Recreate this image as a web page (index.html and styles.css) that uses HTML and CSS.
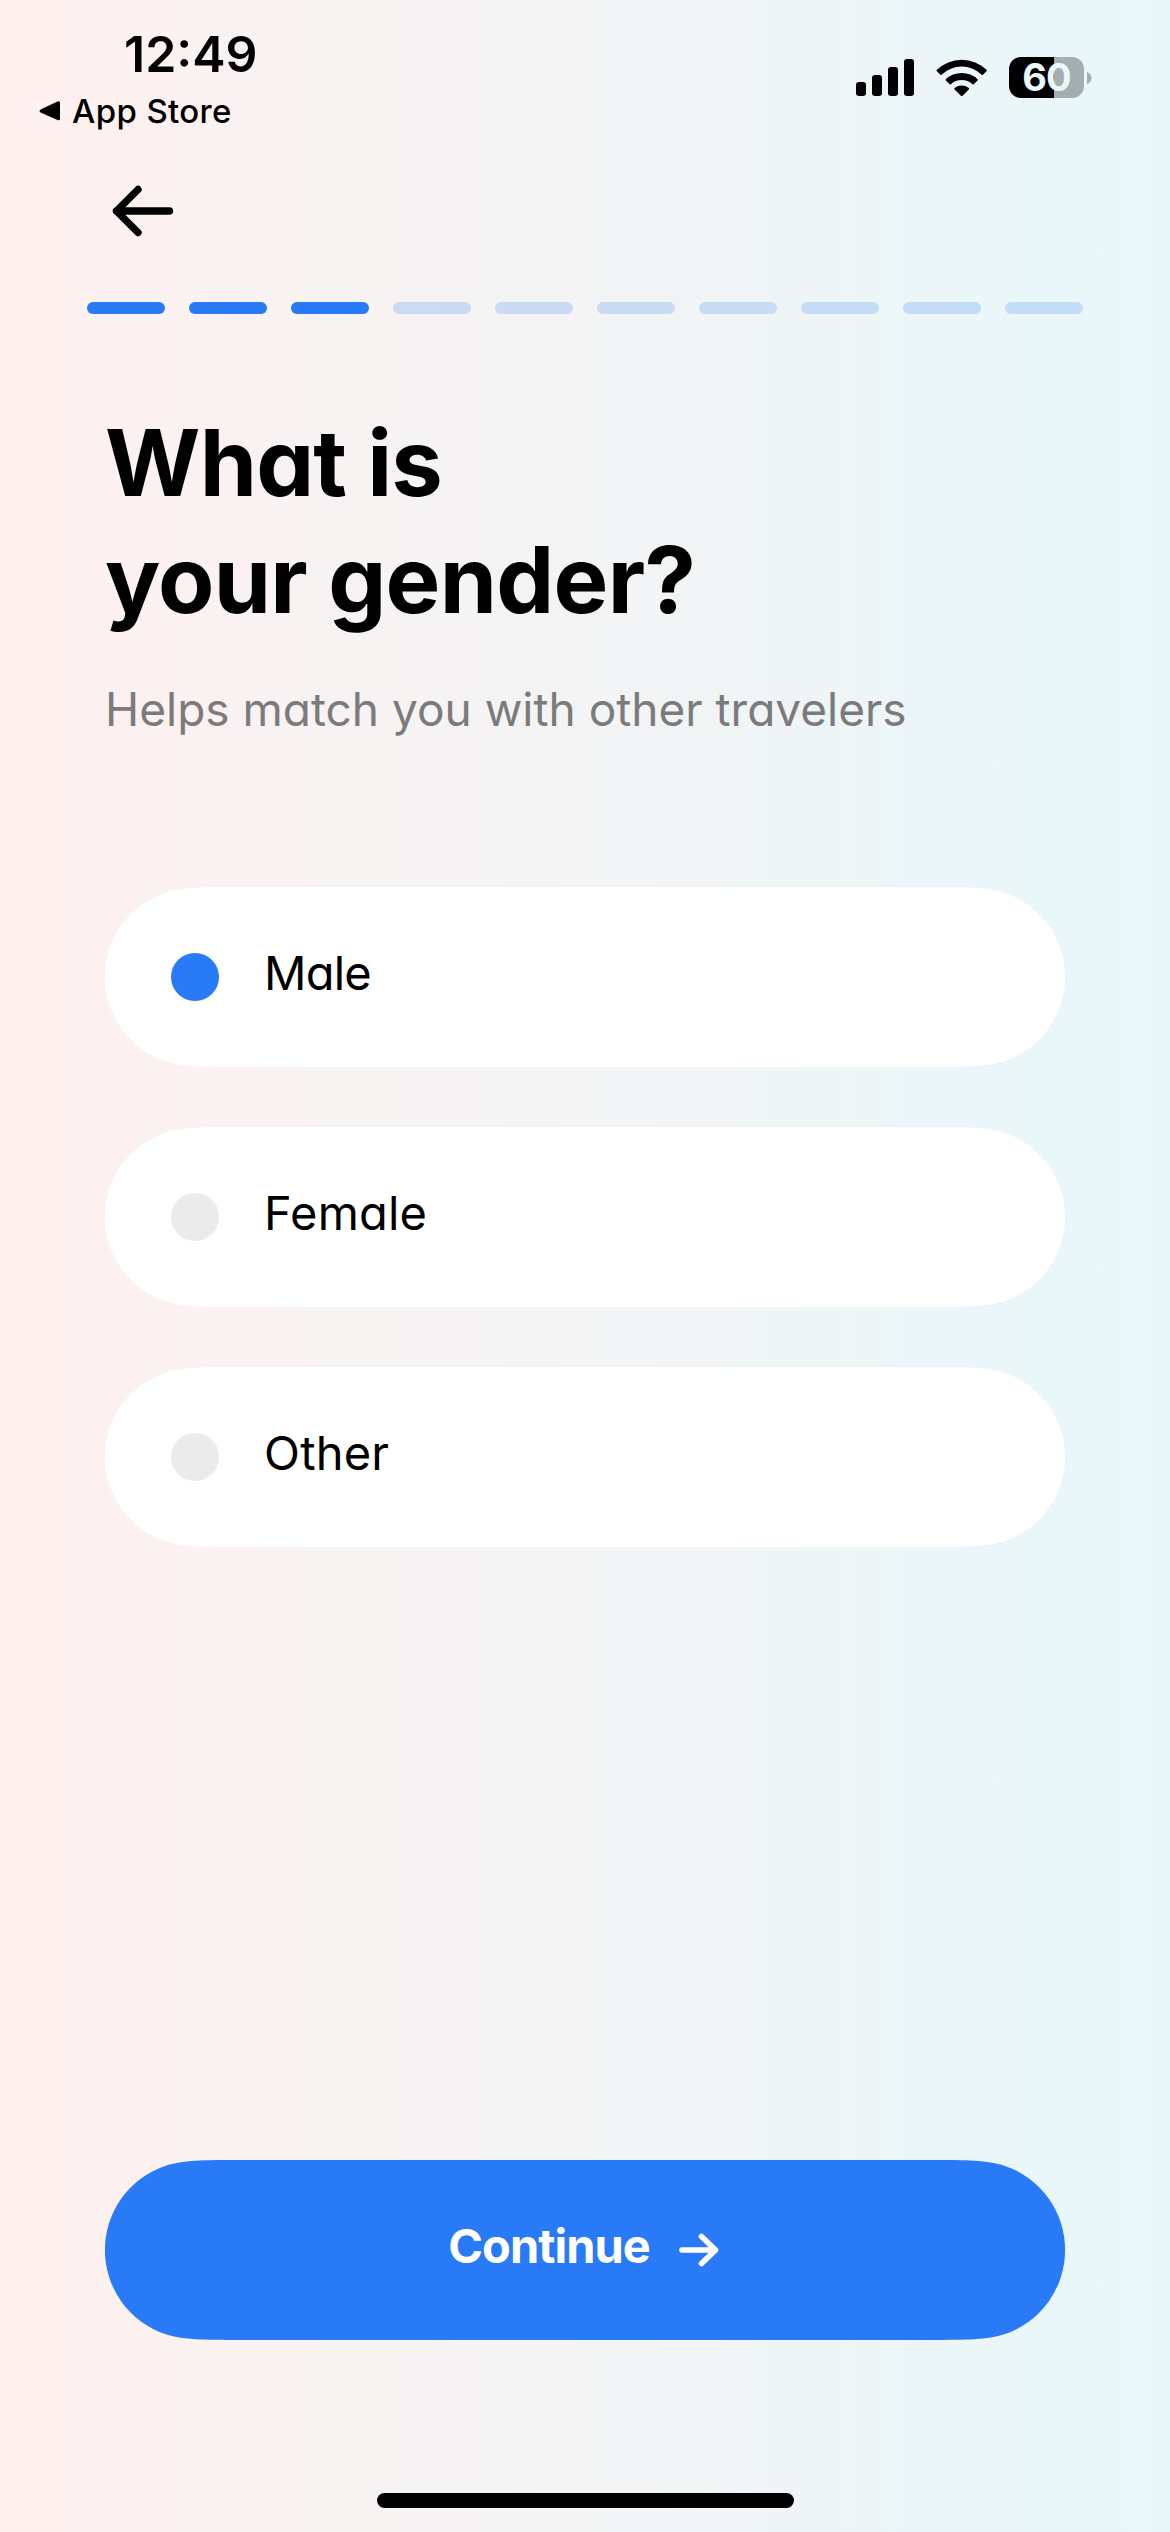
FILE: index.html
```html
<!DOCTYPE html>
<html lang="en">
<head>
<meta charset="utf-8">
<title>What is your gender?</title>
<link rel="stylesheet" href="styles.css">
</head>
<body>
<div class="screen">
  <header class="status">
    <div class="status-left">
      <div class="time">12:49</div>
      <div class="return">
        <svg width="22" height="22" viewBox="0 0 22 22"><path d="M2 9.200 18.500 1.500Q21 .600 21 3V18.500Q21 21 18.500 20L2 12.800Q-1 11 2 9.200Z"/></svg>
        <span>App Store</span>
      </div>
    </div>
    <div class="status-right">
      <svg class="signal" width="58" height="37" viewBox="0 0 58 37"><rect y="23" width="10" height="14" rx="3"/><rect x="16" y="16" width="10" height="21" rx="3"/><rect x="32" y="8" width="10" height="29" rx="3"/><rect x="48" width="10" height="37" rx="3"/></svg>
      <svg class="wifi" width="52" height="38" viewBox="0 0 52 38">
        <path d="M.7 10.900A36 36 0 0 1 50.700 10.900Q51.200 11.500 50.700 12L47 15.700Q46.400 16.300 45.800 15.700A29 29 0 0 0 5.600 15.700Q5 16.300 4.400 15.700L.7 12Q.2 11.500 .7 10.900Z"/>
        <path d="M9.800 20.300A23 23 0 0 1 41.600 20.300Q42.200 20.900 41.600 21.500L37.700 25.200Q37.100 25.700 36.500 25.200A16 16 0 0 0 14.900 25.200Q14.300 25.700 13.700 25.200L9.800 21.500Q9.200 20.900 9.800 20.300Z"/>
        <path d="M18.600 29A11.500 11.500 0 0 1 32.800 29Q33.500 29.700 32.800 30.400L26.500 36.700Q25.700 37.400 24.900 36.700L18.600 30.400Q17.900 29.700 18.600 29Z"/>
      </svg>
      <div class="battery"><div class="battery-body">60</div><svg width="5" height="12" viewBox="0 0 5 12"><path d="M0 0Q4.500 2 4.500 6T0 12Z" fill="#a4adaf"/></svg></div>
    </div>
  </header>

  <nav class="nav">
    <svg width="62" height="52" viewBox="0 0 62 52"><path d="M26 4.500 4.500 26 26 47.500M4.500 26H57.500"/></svg>
  </nav>

  <div class="progress">
    <i class="step done"></i><i class="step done"></i><i class="step done"></i><i class="step"></i><i class="step"></i><i class="step"></i><i class="step"></i><i class="step"></i><i class="step"></i><i class="step"></i>
  </div>

  <main class="content">
    <h1 class="title"><span class="title-a">What is</span><br><span class="title-b">your gender?</span></h1>
    <p class="hint">Helps match you with other travelers</p>
    <div class="options">
      <div class="option pill"><i class="radio selected"></i><span class="label label-tight">Male</span></div>
      <div class="option pill"><i class="radio"></i><span class="label">Female</span></div>
      <div class="option pill"><i class="radio"></i><span class="label">Other</span></div>
    </div>
  </main>

  <footer class="footer">
    <div class="continue pill">
      <span class="continue-label">Continue</span>
      <svg width="40" height="34" viewBox="0 0 40 34"><path d="M3 17H36.500M22.500 3.500 36.500 17 22.500 30.500"/></svg>
    </div>
    <div class="home"></div>
  </footer>
</div>
</body>
</html>
```
FILE: styles.css
```css
* { box-sizing: border-box; }
body { margin: 0; }
svg { display: block; flex: none; }

.screen {
  width: 1170px;
  height: 2532px;
  display: flex;
  flex-direction: column;
  overflow: hidden;
  background: linear-gradient(90deg, #fff0ef 0%, #f8f3f3 28%, #f3f4f5 52%, #ebf6f8 82%, #e7f8fb 100%);
  font-family: Inter, "Liberation Sans", sans-serif;
  font-feature-settings: "cv11";
  color: #000;
}

.status {
  height: 140px;
  display: flex;
  justify-content: space-between;
  padding: 24px 78px 0 39px;
}
.time {
  padding-left: 85px;
  font-size: 50px;
  line-height: 60px;
  font-weight: 600;
  white-space: nowrap;
  font-feature-settings: normal;
}
.return {
  display: flex;
  align-items: center;
  gap: 11px;
  margin-top: 7px;
  height: 40px;
  font-size: 33px;
  line-height: 40px;
  font-weight: 500;
  letter-spacing: .35px;
  white-space: nowrap;
  font-feature-settings: normal;
}
.status-right {
  display: flex;
  align-items: center;
  height: 41px;
  margin-top: 33px;
}
.wifi { margin-left: 22px; }
.battery {
  display: flex;
  align-items: center;
  gap: 3px;
  margin-left: 21px;
}
.battery-body {
  width: 75px;
  height: 41px;
  border-radius: 12px;
  background: linear-gradient(90deg, #000 45px, #a4adaf 45px);
  color: #ebf7fa;
  font-size: 38px;
  line-height: 41px;
  font-weight: 700;
  text-align: center;
  letter-spacing: -1px;
}

.nav {
  height: 162px;
  padding: 45px 0 0 112px;
}
.nav path, .continue path {
  fill: none;
  stroke: #000;
  stroke-width: 7.4;
  stroke-linecap: round;
  stroke-linejoin: round;
}

.progress {
  display: flex;
  gap: 24px;
  padding-left: 87px;
}
.step {
  width: 78px;
  height: 12px;
  border-radius: 6px;
  background: rgba(40, 122, 246, .2);
}
.step.done { background: #287af6; }

.content { padding: 90px 105px 0; }
.title {
  margin: 0;
  font-size: 92px;
  line-height: 117px;
  font-weight: 700;
  white-space: nowrap;
}
.title-a { letter-spacing: -.8px; }
.title-b { letter-spacing: -.7px; }
.hint {
  margin: 41px 0 0;
  font-size: 46px;
  line-height: 60px;
  color: #7c7b7c;
  white-space: nowrap;
}
.options {
  display: flex;
  flex-direction: column;
  gap: 60px;
  margin-top: 148px;
}
.pill {
  display: flex;
  align-items: center;
  width: 960px;
  height: 180px;
  clip-path: path("M135 0C98 0 78 0 60 5.900A88.900 88.900 0 0 0 60 174.100C78 180 98 180 135 180H825C862 180 882 180 900 174.100A88.900 88.900 0 0 0 900 5.900C882 0 862 0 825 0Z");
}
.option {
  gap: 45px;
  padding-left: 66px;
  background: #fff;
}
.radio {
  width: 48px;
  height: 48px;
  border-radius: 50%;
  background: #ebebeb;
}
.radio.selected { background: #287af6; }
.label {
  padding-bottom: 8px;
  font-size: 47px;
  line-height: 60px;
  letter-spacing: .2px;
}
.label-tight { letter-spacing: -.8px; }

.footer {
  margin-top: auto;
  height: 372px;
  padding: 0 105px;
}
.continue {
  justify-content: center;
  gap: 29px;
  padding-right: 3px;
  background: #287af6;
  color: #fff;
}
.continue path { stroke: #fff; stroke-width: 5.6; }
.continue-label {
  padding-bottom: 8px;
  font-size: 47px;
  line-height: 60px;
  font-weight: 700;
  letter-spacing: -1px;
}
.home {
  width: 417px;
  height: 15px;
  margin: 153px auto 0;
  border-radius: 8px;
  background: #000;
}
```
